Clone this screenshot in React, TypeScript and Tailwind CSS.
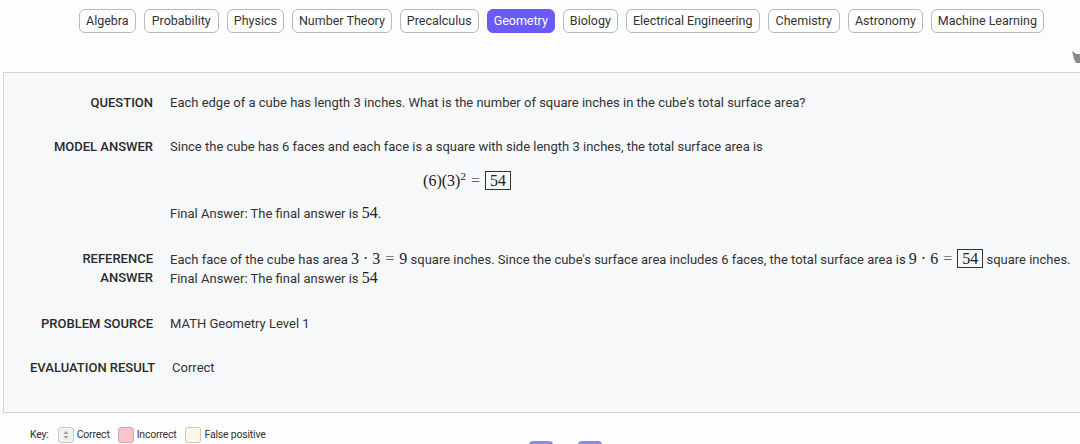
import type { ReactNode } from 'react'

const TOPICS = [
  'Algebra',
  'Probability',
  'Physics',
  'Number Theory',
  'Precalculus',
  'Geometry',
  'Biology',
  'Electrical Engineering',
  'Chemistry',
  'Astronomy',
  'Machine Learning',
]

const ACTIVE = 'Geometry'

function M({ children }: { children: ReactNode }) {
  return (
    <span className="font-['Liberation_Serif',serif] text-[16px] leading-none text-[#222]">{children}</span>
  )
}

function Eq() {
  return <span className="mx-[5px] text-[#666]">=</span>
}

function Boxed({ children }: { children: ReactNode }) {
  return (
    <span className="inline-block border border-[#333] px-[4px] leading-[17px]">{children}</span>
  )
}

function Row({ label, children, className = '' }: { label: ReactNode; children: ReactNode; className?: string }) {
  return (
    <div className={`flex gap-[17px] ${className}`}>
      <div className="min-w-[123px] text-right font-medium uppercase text-[#2b2b2b]">{label}</div>
      <div className="flex-1 text-[#333]">{children}</div>
    </div>
  )
}

function KeySwatch({ className, children }: { className: string; children?: ReactNode }) {
  return (
    <span className={`flex h-[16px] w-[16px] items-center justify-center rounded-[3px] border ${className}`}>
      {children}
    </span>
  )
}

export default function App() {
  return (
    <div className="relative h-[444px] w-[1080px] overflow-hidden bg-[#fdfdfd] font-['Roboto',sans-serif] text-[13px]">
      <div className="flex gap-[8px] pl-[79px] pt-[9px] text-[12.5px]">
        {TOPICS.map((t) => (
          <button
            key={t}
            className={
              t === ACTIVE
                ? 'h-[24px] rounded-[6px] border border-[#6a5af9] bg-[#6a5af9] px-[6px] text-white'
                : `h-[24px] rounded-[6px] border border-[#b9b9b9] bg-white text-[#333] ${t === 'Probability' || t === 'Chemistry' ? 'px-[7px]' : 'px-[6px]'}`
            }
          >
            {t}
          </button>
        ))}
      </div>

      {/* stray cursor remnant at the right edge */}
      <svg className="absolute left-[1071px] top-[51px]" width="10" height="12" viewBox="0 0 10 12">
        <path d="M1 0 L5 3 L9 3 L9 12 L5 12 L3 8 Z" fill="#8a8a8a" />
      </svg>

      <div className="ml-[3px] mt-[39px] w-[1100px] border border-[#d4d4d4] bg-[#f7f8fa] pb-[35px] pl-[26px] pt-[20px] leading-[19px]">
        <Row label="Question" className="mb-[25px]">
          Each edge of a cube has length 3 inches. What is the number of square inches in the cube's total surface
          area?
        </Row>

        <Row label="Model answer" className="mb-[26px]">
          <p>Since the cube has 6 faces and each face is a square with side length 3 inches, the total surface area is</p>
          <div className="flex h-[48px] w-[594px] items-center justify-center">
            <M>
              (6)(3)<sup className="text-[11px]">2</sup>
              <Eq />
              <Boxed>54</Boxed>
            </M>
          </div>
          <p>
            Final Answer: The final answer is <M>54</M>.
          </p>
        </Row>

        <Row
          label={
            <>
              Reference
              <br />
              Answer
            </>
          }
          className="mb-[26px]"
        >
          <p className="whitespace-nowrap">
            Each face of the cube has area{' '}
            <M>
              3 · 3<Eq />9
            </M>{' '}
            square inches. Since the cube's surface area includes 6 faces, the total surface area is{' '}
            <M>
              9 · 6<Eq />
              <Boxed>54</Boxed>
            </M>{' '}
            square inches.
          </p>
          <p>
            Final Answer: The final answer is <M>54</M>
          </p>
        </Row>

        <Row label="Problem source" className="mb-[25px]">
          MATH Geometry Level 1
        </Row>

        <Row label="Evaluation result">Correct</Row>
      </div>

      <div className="mt-[14px] flex items-center pl-[30px] text-[10.5px] tracking-[-0.2px] text-[#333]">
        <span className="mr-[9px]">Key:</span>
        <KeySwatch className="border-[#c8c8c8] bg-[#f2f2f2]">
          <svg width="6" height="10" viewBox="0 0 6 10">
            <path d="M0.5 4 L3 1 L5.5 4 Z M0.5 6 L3 9 L5.5 6 Z" fill="#a0a0a0" />
          </svg>
        </KeySwatch>
        <span className="ml-[3px] mr-[8px]">Correct</span>
        <KeySwatch className="border-[#c8aab0] bg-[#fbc4cc]" />
        <span className="ml-[3px] mr-[9px]">Incorrect</span>
        <KeySwatch className="border-[#cfcab8] bg-[#fdf7e6]" />
        <span className="ml-[3px]">False positive</span>
      </div>

      <div className="mt-[-2px] flex gap-[25px] pl-[529px]">
        <span className="h-[16px] w-[24px] rounded-[4px] bg-[#8f88e4]" />
        <span className="h-[16px] w-[24px] rounded-[4px] bg-[#8f88e4]" />
      </div>
    </div>
  )
}
